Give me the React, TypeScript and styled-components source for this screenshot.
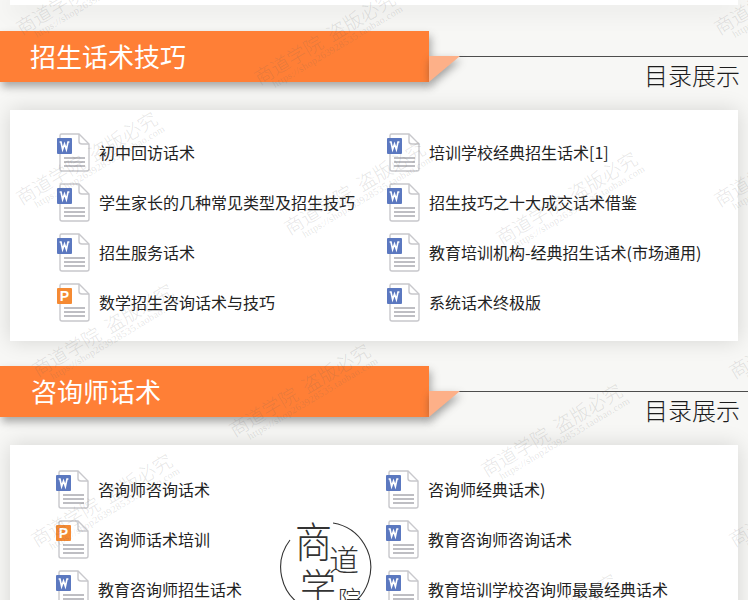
import styled, { createGlobalStyle } from 'styled-components';

type FileKind = 'word' | 'ppt';

interface FileEntry {
  name: string;
  kind: FileKind;
}

const GlobalStyle = createGlobalStyle`
  html, body {
    margin: 0;
    padding: 0;
    height: 600px;
    overflow: hidden;
    background: #f7f7f5;
  }
  #root {
    height: 600px;
    overflow: hidden;
  }
`;

const Page = styled.div`
  position: relative;
  width: 748px;
  height: 600px;
  overflow: hidden;
  background: #f7f7f5;
  font-family: 'Noto Sans CJK SC', 'Liberation Sans', sans-serif;
  color: #222;
`;

const TopCard = styled.div`
  height: 5px;
  margin: 0 10px;
  background: #fff;
  box-shadow: 0 3px 24px rgba(0, 0, 0, 0.18);
`;

const Section = styled.section<{ $gap: number }>`
  margin-top: ${props => props.$gap}px;
`;

const Header = styled.header`
  display: flex;
  height: 51px;
`;

const Banner = styled.div<{ $indent: number }>`
  position: relative;
  flex: 0 0 429px;
  height: 51px;
  padding-left: ${props => props.$indent}px;
  box-sizing: border-box;
  background: #ff7f36;
  box-shadow: 2px 5px 8px rgba(60, 60, 60, 0.42);
  color: #fff;
  font-size: 26px;
  line-height: 49px;
`;

const FlapShadow = styled.div`
  position: absolute;
  left: 100%;
  top: 25px;
  filter: drop-shadow(1px 4px 4px rgba(50, 50, 50, 0.45));
`;

const Flap = styled.div`
  width: 31px;
  height: 26px;
  background: #fdb088;
  clip-path: polygon(0 0, 100% 0, 0 100%);
`;

const Aside = styled.div`
  flex: 1;
  margin-top: 25px;
  height: 26px;
  border-top: 1px solid #4d4d4d;
  padding-right: 8px;
  color: #1c1c1c;
  font-size: 24px;
  font-weight: 300;
  line-height: 36px;
  text-align: right;
`;

const Card = styled.div<{ $top: number; $left: number }>`
  position: relative;
  margin: 28px 10px 0;
  padding: ${props => props.$top}px 0 13px ${props => props.$left}px;
  background: #fff;
  box-shadow: 0 0 20px rgba(0, 0, 0, 0.14);
`;

const Files = styled.ul`
  display: grid;
  grid-template-columns: 330px 1fr;
  grid-auto-rows: 50px;
  margin: 0;
  padding: 0;
  list-style: none;
`;

const FileRow = styled.li`
  display: flex;
  align-items: center;
  gap: 9px;
  padding-bottom: 2px;
  box-sizing: border-box;
  font-size: 16px;
  white-space: nowrap;
`;

const IconBox = styled.svg`
  flex: 0 0 34px;
  width: 34px;
  height: 40px;
`;

const Stamp = styled.svg`
  position: absolute;
  left: 268px;
  top: 72px;
  width: 100px;
  height: 100px;
  overflow: visible;
`;

const Watermarks = styled.div`
  position: absolute;
  inset: 0;
  z-index: 5;
  pointer-events: none;
  overflow: hidden;
`;

const Mark = styled.div<{ $x: number; $y: number }>`
  position: absolute;
  left: ${props => props.$x}px;
  top: ${props => props.$y}px;
  transform: rotate(-31deg);
  transform-origin: 0 50%;
  color: rgba(95, 95, 95, 0.17);
  font-family: 'Noto Sans CJK SC', 'Liberation Serif', serif;
  font-size: 19px;
  font-weight: 300;
  line-height: 20px;
  white-space: pre;
`;

const MarkUrl = styled.div`
  margin-left: 12px;
  font-family: 'Liberation Serif', serif;
  font-size: 10px;
  line-height: 10px;
  letter-spacing: 0.3px;
`;

const FileIcon = ({ kind }: { kind: FileKind }) => (
  <IconBox viewBox="0 0 34 40">
    <path
      d="M4 3.5 Q4 2 5.5 2 H23 L33 12 V37 Q33 39 31 39 H6 Q4 39 4 37 Z"
      fill="#fff"
      stroke="#c8c8cc"
      strokeWidth="1.4"
    />
    <path d="M23 2 V9.5 Q23 12 26 12 H33" fill="none" stroke="#c8c8cc" strokeWidth="1.4" />
    <path d="M8 26 H29 M8 30 H29 M8 34 H29" stroke="#a9a9b0" strokeWidth="1.4" />
    <rect x="1" y="6" width="15" height="16" rx="1" fill={kind === 'word' ? '#5b78c0' : '#f58a33'} />
    {kind === 'word' ? (
      <path d="M3.6 10 H5 L6.6 17.5 L8.5 12 L10.4 17.5 L12 10 H13.4" fill="none" stroke="#fff" strokeWidth="1.6" />
    ) : (
      <text x="8.5" y="19" fill="#fff" fontFamily="Liberation Sans, sans-serif" fontSize="14" fontWeight="700" textAnchor="middle">
        P
      </text>
    )}
  </IconBox>
);

const LogoStamp = () => (
  <Stamp viewBox="0 0 100 100">
    <path d="M55 6 A45 45 0 1 1 12 23" fill="none" stroke="#333" strokeWidth="1.1" />
    <g fill="#333" fontFamily="Noto Sans CJK SC, sans-serif" fontWeight="300">
      <text x="0" y="0" fontSize="37" transform="translate(17 41) scale(1 1.15)">商</text>
      <text x="51" y="54" fontSize="30">道</text>
      <text x="22" y="83" fontSize="36">学</text>
      <text x="60" y="90" fontSize="23">院</text>
    </g>
  </Stamp>
);

const enrollFiles: FileEntry[] = [
  { name: '初中回访话术', kind: 'word' },
  { name: '培训学校经典招生话术[1]', kind: 'word' },
  { name: '学生家长的几种常见类型及招生技巧', kind: 'word' },
  { name: '招生技巧之十大成交话术借鉴', kind: 'word' },
  { name: '招生服务话术', kind: 'word' },
  { name: '教育培训机构-经典招生话术(市场通用)', kind: 'word' },
  { name: '数学招生咨询话术与技巧', kind: 'ppt' },
  { name: '系统话术终极版', kind: 'word' },
];

const advisorFiles: FileEntry[] = [
  { name: '咨询师咨询话术', kind: 'word' },
  { name: '咨询师经典话术)', kind: 'word' },
  { name: '咨询师话术培训', kind: 'ppt' },
  { name: '教育咨询师咨询话术', kind: 'word' },
  { name: '教育咨询师招生话术', kind: 'word' },
  { name: '教育培训学校咨询师最最经典话术', kind: 'word' },
];

const marks = [
  [20, 18], [258, 68], [20, 188], [288, 218], [500, 228], [718, 18], [718, 190],
  [36, 360], [233, 420], [485, 460], [35, 530], [480, 650], [733, 362], [733, 530],
];

const FileList = ({ files }: { files: FileEntry[] }) => (
  <Files>
    {files.map(file => (
      <FileRow key={file.name}>
        <FileIcon kind={file.kind} />
        {file.name}
      </FileRow>
    ))}
  </Files>
);

export default function App() {
  return (
    <Page>
      <GlobalStyle />
      <TopCard />
      <Section $gap={26}>
        <Header>
          <Banner $indent={30}>
            招生话术技巧
            <FlapShadow><Flap /></FlapShadow>
          </Banner>
          <Aside>目录展示</Aside>
        </Header>
        <Card $top={18} $left={46}>
          <FileList files={enrollFiles} />
        </Card>
      </Section>
      <Section $gap={25}>
        <Header>
          <Banner $indent={31}>
            咨询师话术
            <FlapShadow><Flap /></FlapShadow>
          </Banner>
          <Aside>目录展示</Aside>
        </Header>
        <Card $top={20} $left={45}>
          <FileList files={advisorFiles} />
          <LogoStamp />
        </Card>
      </Section>
      <Watermarks>
        {marks.map(([x, y]) => (
          <Mark key={`${x}-${y}`} $x={x} $y={y}>
            商道学院  盗版必究
            <MarkUrl>https://shop263928535.taobao.com</MarkUrl>
          </Mark>
        ))}
      </Watermarks>
    </Page>
  );
}
